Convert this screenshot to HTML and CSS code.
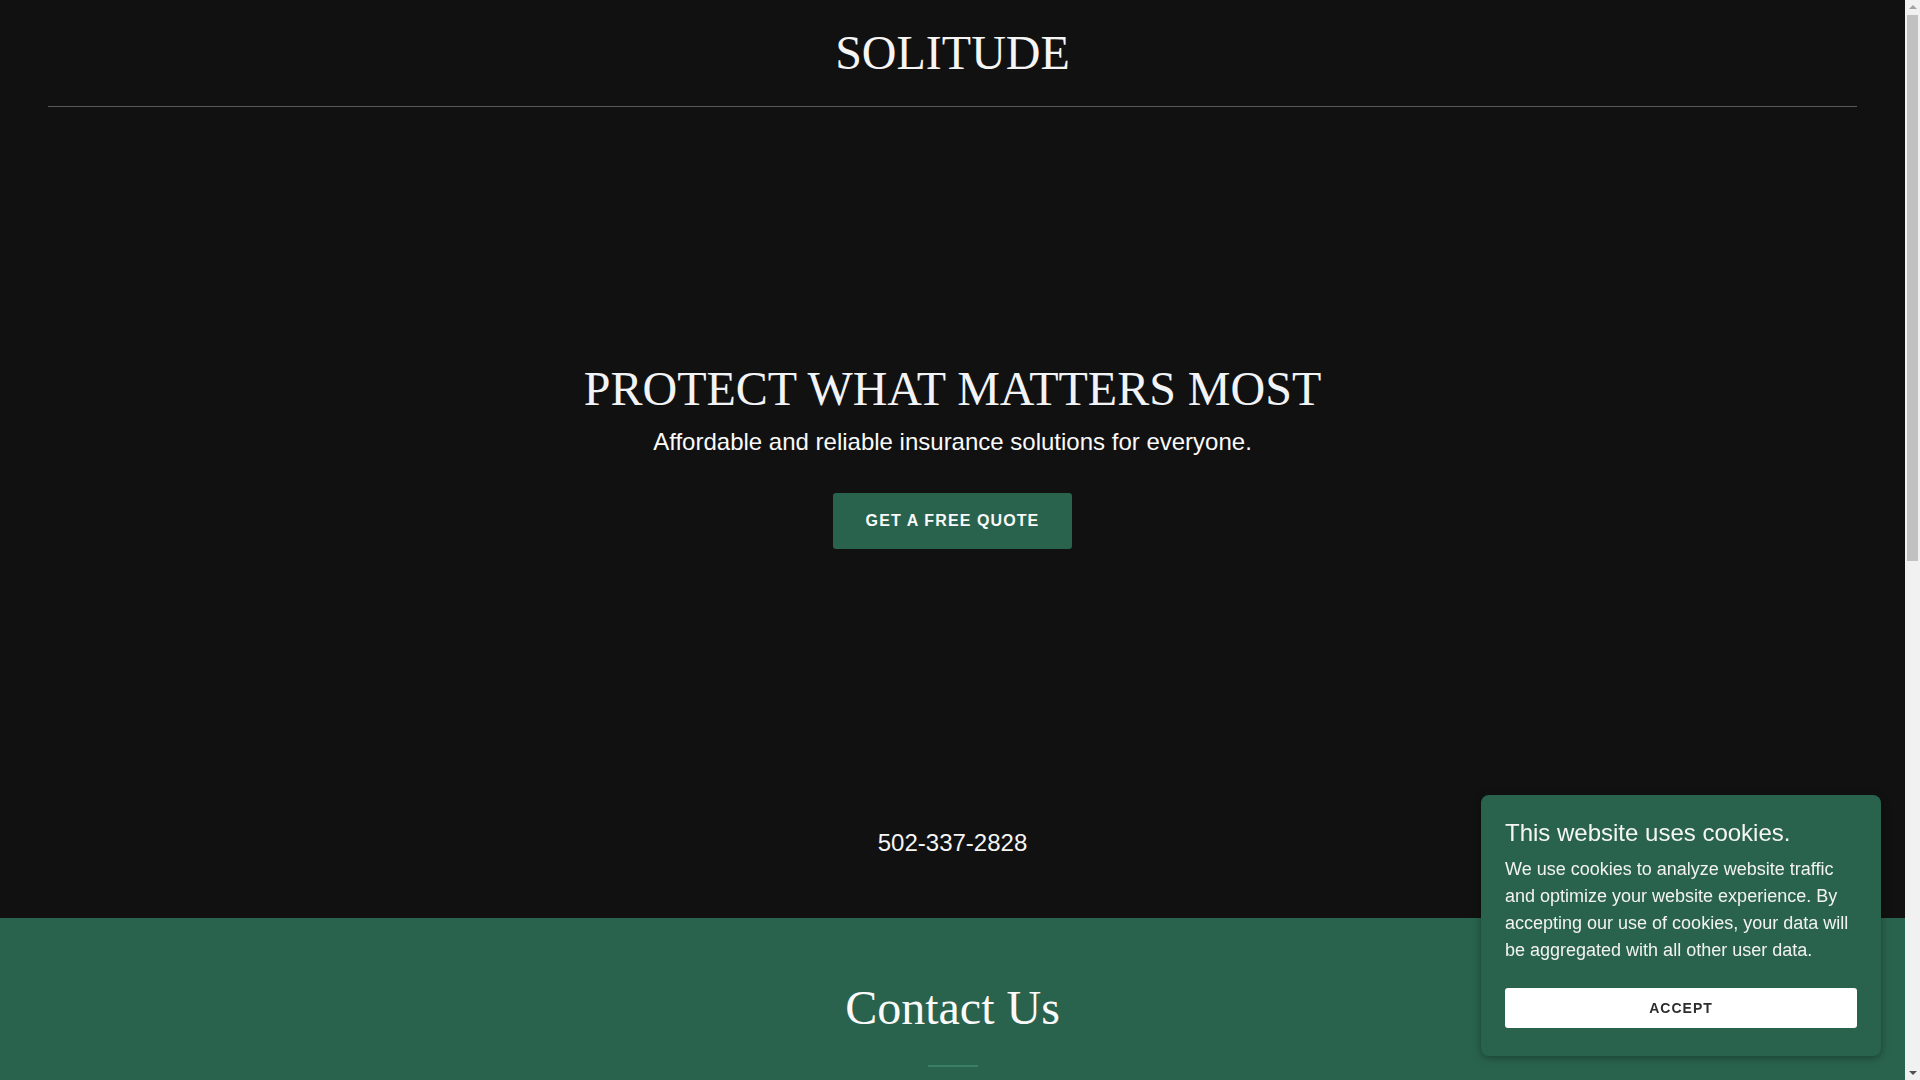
FILE: index.html
```html
<!DOCTYPE html>
<html lang="en">
<head>
    <meta charset="utf-8">
    <title>SOLITUDE</title>
    <link rel="stylesheet" href="styles.css">
</head>
<body>

<header class="site-header">
    <div class="brand">SOLITUDE</div>
</header>

<section class="hero">
    <h1 class="hero-title">PROTECT WHAT MATTERS MOST</h1>
    <p class="hero-sub">Affordable and reliable insurance solutions for everyone.</p>
    <a class="btn-quote" href="#contact">GET A FREE QUOTE</a>
    <p class="phone">502-337-2828</p>
</section>

<section class="contact" id="contact">
    <h2 class="contact-title">Contact Us</h2>
    <div class="contact-rule"></div>
</section>

<div class="cookie-box">
    <h4 class="cookie-title">This website uses cookies.</h4>
    <p class="cookie-text">We use cookies to analyze website traffic and optimize your website experience. By accepting our use of cookies, your data will be aggregated with all other user data.</p>
    <a class="btn-accept" href="#">ACCEPT</a>
</div>

<!-- page scrollbar -->
<div class="scrollbar">
    <span class="sb-up"></span>
    <span class="sb-thumb"></span>
    <span class="sb-down"></span>
</div>

</body>
</html>
```

FILE: styles.css
```css
body {margin: 0 15px 0 0; background: #111111; color: #f5f5f5;}
body {font-family: "Liberation Sans", Arial, sans-serif;}
a {text-decoration: none;}

/* header */
.site-header {padding: 0 48px;}
.brand {
    font-family: "Liberation Serif", "Times New Roman", serif;
    font-size: 48px; line-height: 1.2; text-align: center;
    padding: 24px 0; border-bottom: 1px solid #595959;
}

/* hero */
.hero {
    display: flex; flex-direction: column; align-items: center;
    padding: 253px 24px 57px 24px;
}
.hero-title {
    margin: 0; font-weight: normal; color: #f1f3f6;
    font-family: "Liberation Serif", "Times New Roman", serif;
    font-size: 48px; line-height: 1.2;
}
.hero-sub {margin: 7px 0 0 0; font-size: 24px; line-height: 1.5; color: #fafafa;}
.btn-quote {
    margin-top: 33px; display: block;
    background: #29634e; color: #fafafa; border-radius: 3px;
    font-size: 16px; font-weight: bold; letter-spacing: 1.1px;
    line-height: 56px; padding: 0 33px;
}
.phone {margin: 276px 0 0 0; font-size: 24px; line-height: 1.5;}

/* contact */
.contact {
    background: #29634e; min-height: 1098px; padding-top: 61px;
    display: flex; flex-direction: column; align-items: center;
}
.contact-title {
    margin: 0; font-weight: normal; color: #fafafa;
    font-family: "Liberation Serif", "Times New Roman", serif;
    font-size: 48px; line-height: 1.2;
}
.contact-rule {margin-top: 28px; width: 50px; height: 2px; background: #3b7f65;}

/* cookie banner */
.cookie-box {
    position: fixed; right: 39px; bottom: 24px; width: 352px;
    padding: 24px 24px 28px 24px; background: #29634e; border-radius: 8px;
    box-shadow: 0 2px 8px rgba(0, 0, 0, 0.35);
}
.cookie-title {margin: 0 0 9px 0; font-size: 24px; font-weight: normal; line-height: 1.15;}
.cookie-text {margin: 0; font-size: 18px; line-height: 27px; color: #f2f2f2;}
.btn-accept {
    display: block; margin-top: 24px; background: #ffffff; color: #2d2d2d;
    border-radius: 3px; text-align: center; line-height: 40px;
    font-size: 14px; font-weight: bold; letter-spacing: 1px;
}

/* scrollbar */
.scrollbar {
    position: fixed; top: 0; right: 0; width: 15px; height: 100vh;
    background: #f1f1f1; display: flex; flex-direction: column; align-items: center;
}
.sb-up, .sb-down {width: 0; height: 0; border-left: 4px solid transparent; border-right: 4px solid transparent;}
.sb-up {margin-top: 5px; border-bottom: 4px solid #a3a3a3;}
.sb-down {margin-top: auto; margin-bottom: 5px; border-top: 4px solid #505050;}
.sb-thumb {margin-top: 6px; width: 11px; height: 546px; background: #c1c1c1;}
```
